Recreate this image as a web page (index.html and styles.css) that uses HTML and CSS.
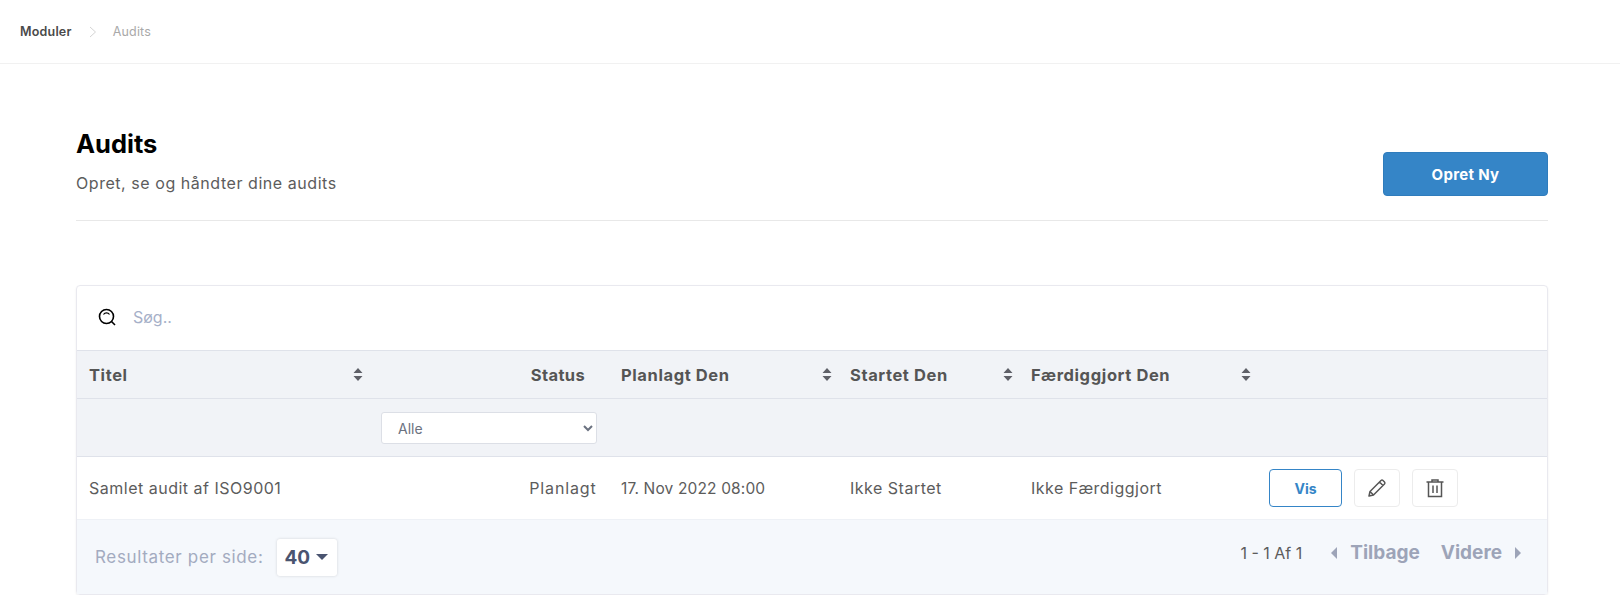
FILE: index.html
```html
<!DOCTYPE html>
<html lang="da">
    <head>
        <title>Audits</title>
        <meta charset="utf-8">
        <link rel="stylesheet" href="styles.css">
    </head>
    <body>
        <div class="topbar">
            <span class="crumb-main">Moduler</span>
            <svg class="crumb-sep" width="8" height="12" viewBox="0 0 8 12"><path d="M1 1l5.500 5L1 11" fill="none" stroke="#d4d4d4" stroke-width="1"/></svg>
            <span class="crumb-sub">Audits</span>
        </div>
        <div class="page">
            <div class="page-head">
                <div>
                    <h1>Audits</h1>
                    <p>Opret, se og håndter dine audits</p>
                </div>
                <button class="btn-new">Opret Ny</button>
            </div>
            <div class="card">
                <div class="search">
                    <svg width="20" height="20" viewBox="0 0 20 20"><circle cx="9.500" cy="9.500" r="7" fill="none" stroke="#000" stroke-width="1.600"/><path d="M14.500 14.500l3.500 3.500" stroke="#000" stroke-width="1.600" fill="none"/><path d="M6.500 7.500a3.500 3.500 0 0 1 6 0" stroke="#000" stroke-width="1.200" fill="none"/></svg>
                    <input type="text" placeholder="Søg..">
                </div>
                <table>
                    <colgroup>
                        <col class="col-titel">
                        <col class="col-status">
                        <col class="col-planlagt">
                        <col class="col-startet">
                        <col class="col-faerdig">
                        <col>
                    </colgroup>
                    <thead>
                        <tr class="head-row">
                            <th><div class="th-inner">Titel <svg class="sort" width="10" height="13" viewBox="0 0 10 13"><path d="M5 0l4.500 5H.5zM5 13L.5 8h9z" fill="#5f6068"/></svg></div></th>
                            <th class="th-status">Status</th>
                            <th><div class="th-inner">Planlagt Den <svg class="sort" width="10" height="13" viewBox="0 0 10 13"><path d="M5 0l4.500 5H.5zM5 13L.5 8h9z" fill="#5f6068"/></svg></div></th>
                            <th><div class="th-inner">Startet Den <svg class="sort" width="10" height="13" viewBox="0 0 10 13"><path d="M5 0l4.500 5H.5zM5 13L.5 8h9z" fill="#5f6068"/></svg></div></th>
                            <th><div class="th-inner">Færdiggjort Den <svg class="sort" width="10" height="13" viewBox="0 0 10 13"><path d="M5 0l4.500 5H.5zM5 13L.5 8h9z" fill="#5f6068"/></svg></div></th>
                            <th></th>
                        </tr>
                        <tr class="filter-row">
                            <th></th>
                            <th class="th-filter">
                                <select class="filter">
                                    <option>Alle</option>
                                </select>
                            </th>
                            <th></th>
                            <th></th>
                            <th></th>
                            <th></th>
                        </tr>
                    </thead>
                    <tbody>
                        <tr>
                            <td>Samlet audit af ISO9001</td>
                            <td class="td-status">Planlagt</td>
                            <td class="td-date">17. Nov 2022 08:00</td>
                            <td>Ikke Startet</td>
                            <td>Ikke Færdiggjort</td>
                            <td>
                                <div class="actions">
                                    <button class="btn-vis">Vis</button>
                                    <button class="btn-icon">
                                        <svg width="20" height="20" viewBox="0 0 20 20"><path d="M2 18l1-4.500L14 2.500a1.500 1.500 0 0 1 2 0l1.500 1.500a1.500 1.500 0 0 1 0 2L6.500 17zM12.500 4l3.500 3.500M3 13.500L6.500 17" fill="none" stroke="#555" stroke-width="1.500" stroke-linejoin="round"/></svg>
                                    </button>
                                    <button class="btn-icon">
                                        <svg width="20" height="20" viewBox="0 0 20 20"><path d="M1.500 4h17M7 4V2h6v2M3.500 4v14.500h13V4M8 7.500v7.500M12 7.500v7.500" fill="none" stroke="#555" stroke-width="1.500"/></svg>
                                    </button>
                                </div>
                            </td>
                        </tr>
                    </tbody>
                </table>
                <div class="pager">
                    <div class="per-page">
                        <span>Resultater per side:</span>
                        <div class="per-select">40 <i class="caret-down"></i></div>
                    </div>
                    <div class="pager-right">
                        <span class="count">1 - 1 Af 1</span>
                        <span class="nav"><i class="caret-left"></i>Tilbage</span>
                        <span class="nav">Videre<i class="caret-right"></i></span>
                    </div>
                </div>
            </div>
        </div>
    </body>
</html>
```

FILE: styles.css
```css
html{
    background-color: #fff;
}
body{
    margin: 0;
    font-family: "Inter", "Liberation Sans", sans-serif;
    color: #555;
}
.topbar{
    display: flex;
    align-items: center;
    height: 63px;
    padding-left: 20px;
    border-bottom: 1px solid #f1f1f1;
    font-size: 12.5px;
}
.crumb-main{
    font-weight: 600;
    color: #4a4a4a;
    letter-spacing: .2px;
}
.crumb-sep{
    margin: 0 16px 0 17px;
}
.crumb-sub{
    color: #a9a9a9;
    letter-spacing: .2px;
}
.page{
    padding: 0 72px 0 76px;
}
.page-head{
    display: flex;
    justify-content: space-between;
    align-items: flex-end;
    height: 157px;
    padding-bottom: 24px;
    box-sizing: border-box;
    border-bottom: 1px solid #e8e8e8;
}
h1{
    margin: 0 0 12px;
    font-size: 25.5px;
    line-height: 30px;
    font-weight: 700;
    color: #000;
}
.page-head p{
    margin: 0 0 1px;
    font-size: 16px;
    line-height: 24px;
    color: #5c5c5c;
    letter-spacing: .55px;
}
.btn-new{
    width: 165px;
    height: 44px;
    background: #3585c7;
    border: 1px solid #2f7cbc;
    border-radius: 4px;
    color: #fff;
    font: 700 15px "Inter", sans-serif;
    letter-spacing: .3px;
}
.card{
    margin-top: 64px;
    border: 1px solid #e9e9ef;
    border-radius: 4px;
    box-shadow: 0 1px 2px rgba(0,0,0,.08);
}
.search{
    display: flex;
    align-items: center;
    gap: 14px;
    height: 64px;
    padding: 0 0 2px 20px;
    box-sizing: border-box;
}
.search input{
    border: 0;
    outline: 0;
    font: 16px "Inter", sans-serif;
    color: #555;
}
.search input::placeholder{
    color: #a6b0c8;
}
table{
    width: 100%;
    border-collapse: collapse;
    table-layout: fixed;
    font-size: 16px;
}
.col-titel{
    width: 292px;
}
.col-status{
    width: 240px;
}
.col-planlagt{
    width: 229px;
}
.col-startet{
    width: 181px;
}
.col-faerdig{
    width: 238px;
}
thead th{
    background: #f1f3f7;
    border-top: 1px solid #dfe2ea;
    text-align: left;
    padding: 0 6.5px 0 12px;
    font-size: 16.5px;
    font-weight: 700;
    color: #555;
    letter-spacing: .6px;
}
.head-row{
    height: 48px;
}
.filter-row{
    height: 58px;
}
.th-inner{
    display: flex;
    justify-content: space-between;
    align-items: center;
}
thead .th-status{
    text-align: right;
    padding-right: 24px;
    letter-spacing: .35px;
}
thead .th-filter{
    padding: 1px 12px 0;
}
.filter{
    display: block;
    width: 100%;
    height: 32px;
    padding-left: 12px;
    background: #fff;
    border: 1px solid #dcdfe6;
    border-radius: 3px;
    font: 400 14px "Inter", sans-serif;
    color: #6b7280;
}
tbody td{
    height: 62px;
    padding: 0 12px;
    border-top: 1px solid #dfe2ea;
    color: #5c5c5c;
    letter-spacing: .5px;
}
tbody .td-status{
    text-align: right;
    padding-right: 12.5px;
    letter-spacing: .85px;
}
tbody .td-date{
    font-size: 15.5px;
    letter-spacing: .15px;
}
.actions{
    display: flex;
    gap: 12px;
}
.btn-vis{
    width: 73px;
    height: 38px;
    background: #fff;
    border: 1px solid #3585c7;
    border-radius: 4px;
    color: #3585c7;
    font: 700 14px "Inter", sans-serif;
}
.btn-icon{
    display: flex;
    align-items: center;
    justify-content: center;
    width: 46px;
    height: 38px;
    padding: 0;
    background: #fff;
    border: 1px solid #ececec;
    border-radius: 4px;
}
.pager{
    display: flex;
    justify-content: space-between;
    align-items: center;
    height: 75px;
    padding: 0 26px 0 18px;
    background: #f5f8fc;
    border-top: 1px solid #eef1f6;
    box-sizing: border-box;
}
.per-page{
    display: flex;
    align-items: center;
    gap: 14px;
    font-size: 17px;
    letter-spacing: .65px;
    color: #a3abc0;
}
.per-select{
    display: flex;
    align-items: center;
    gap: 6px;
    width: 60px;
    height: 37px;
    padding-left: 7px;
    box-sizing: border-box;
    background: #fff;
    border-radius: 3px;
    box-shadow: 0 0 3px rgba(0,0,0,.15);
    font-size: 19px;
    font-weight: 700;
    letter-spacing: 0;
    color: #4a5470;
}
.caret-down{
    width: 0;
    height: 0;
    border-left: 6px solid transparent;
    border-right: 6px solid transparent;
    border-top: 6px solid #4a5470;
}
.pager-right{
    display: flex;
    align-items: center;
    padding-bottom: 9px;
    font-size: 16px;
}
.count{
    color: #5c5c5c;
    margin-right: 29px;
}
.nav{
    display: flex;
    align-items: center;
    gap: 13px;
    font-size: 19px;
    font-weight: 700;
    color: #9da4b8;
}
.nav + .nav{
    margin-left: 21px;
}
.caret-left{
    border-top: 6px solid transparent;
    border-bottom: 6px solid transparent;
    border-right: 6px solid #9da4b8;
}
.caret-right{
    border-top: 6px solid transparent;
    border-bottom: 6px solid transparent;
    border-left: 6px solid #9da4b8;
}
```
